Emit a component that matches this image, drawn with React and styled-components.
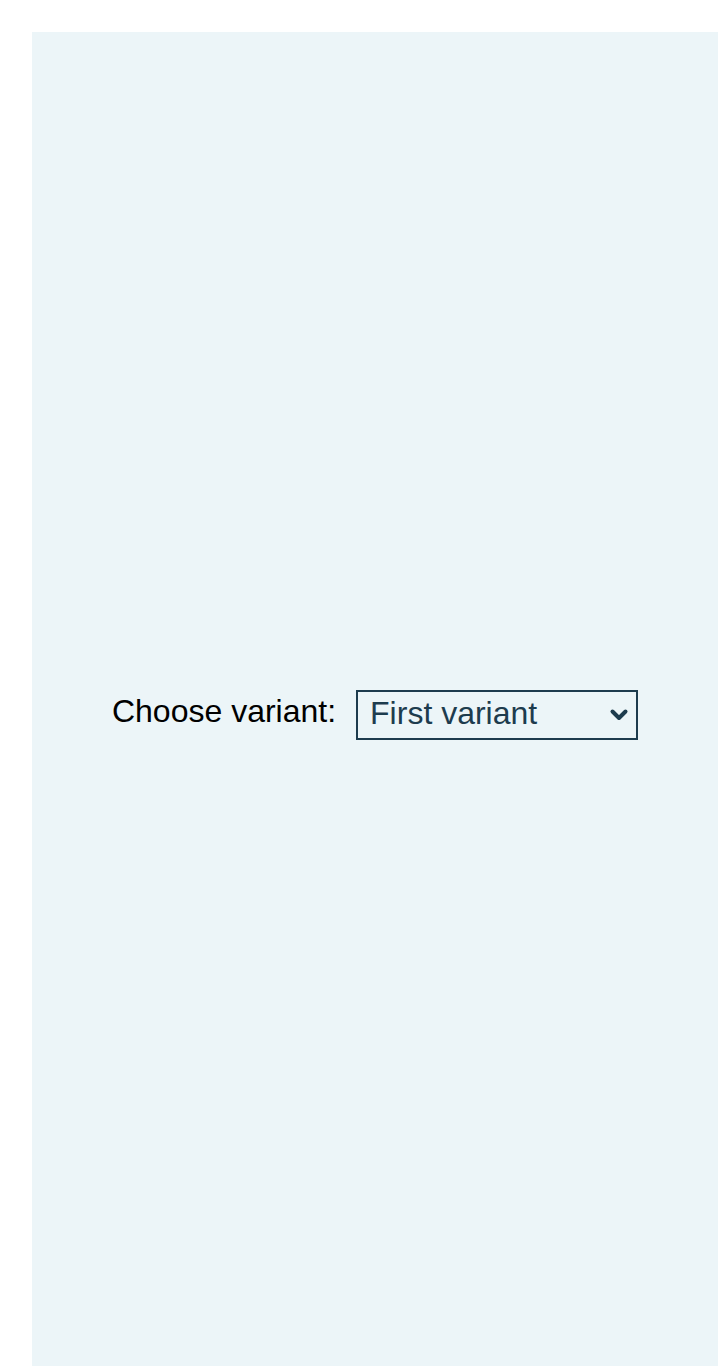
import React, { useState } from "react";
import styled, { createGlobalStyle } from "styled-components";

// Global reset
const GlobalStyle = createGlobalStyle`
	html, body {
		margin: 0;
		padding: 0;
		background: #ffffff;
		overflow: hidden;
	}
	body {
		padding: 32px 0 0 32px;
		font-family: "Liberation Sans", Arial, sans-serif;
	}
`;

const Panel = styled.main`
	width: 686px;
	height: 1366px;
	background-color: #ecf5f8;
	display: flex;
	justify-content: center;
	align-items: center;
`;

const Field = styled.div`
	display: flex;
	align-items: center;
	column-gap: 20px;
`;

const Label = styled.label`
	font-size: 32px;
	color: #000;
	padding-bottom: 8px;
`;

const SelectWrapper = styled.div`
	position: relative;
	width: 282px;
	height: 50px;
`;

const Select = styled.select`
	appearance: none;
	-webkit-appearance: none;
	box-sizing: border-box;
	width: 100%;
	height: 100%;
	margin: 0;
	padding: 0 40px 4px 12px;
	border: 2px solid #1d3c4e;
	border-radius: 0;
	background-color: transparent;
	color: #1d3c4e;
	font-family: "Liberation Sans", Arial, sans-serif;
	font-size: 32px;
	outline: none;
`;

const Chevron = styled.svg`
	position: absolute;
	right: 9px;
	top: 50%;
	transform: translateY(-50%);
	pointer-events: none;
`;

export default function App() {
	const [variant, setVariant] = useState("first"); // selected variant

	return (
		<>
			<GlobalStyle />
			<Panel>
				<Field>
					<Label htmlFor="variant">Choose variant:</Label>
					<SelectWrapper>
						<Select
							id="variant"
							value={variant}
							onChange={(e) => setVariant(e.target.value)}
						>
							<option value="first">First variant</option>
							<option value="second">Second variant</option>
						</Select>
						<Chevron width="20" height="14" viewBox="0 0 20 14">
							<path
								d="M3.5 3.5 L10 10 L16.5 3.5"
								fill="none"
								stroke="#1d3c4e"
								strokeWidth="4"
								strokeLinecap="round"
								strokeLinejoin="round"
							/>
						</Chevron>
					</SelectWrapper>
				</Field>
			</Panel>
		</>
	);
}
